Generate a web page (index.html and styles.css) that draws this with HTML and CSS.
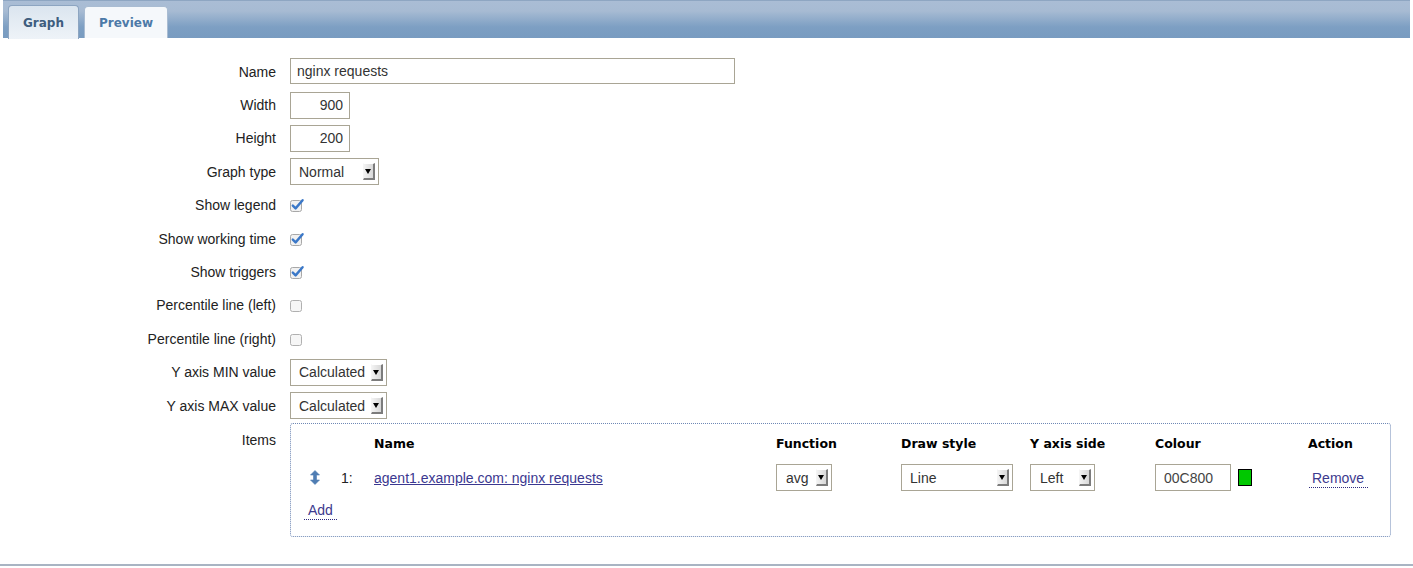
FILE: index.html
```html
<!DOCTYPE html>
<html lang="en">
<head>
    <meta charset="UTF-8">
    <title>Graph</title>
    <link rel="stylesheet" href="styles.css">
</head>
<body>
    <div class="page">
        <div class="tabs">
            <span class="tab active">Graph</span>
            <span class="tab">Preview</span>
        </div>
        <div class="form">
            <div class="row">
                <label>Name</label>
                <input class="text name" type="text" value="nginx requests">
            </div>
            <div class="row">
                <label>Width</label>
                <input class="text num" type="text" value="900">
            </div>
            <div class="row">
                <label>Height</label>
                <input class="text num" type="text" value="200">
            </div>
            <div class="row">
                <label>Graph type</label>
                <div class="select w-normal"><span>Normal</span><span class="arrow"></span></div>
            </div>
            <div class="row">
                <label>Show legend</label>
                <svg class="check" width="16" height="14" viewBox="0 0 16 14"><rect x="1.5" y="2.5" width="11" height="11" rx="2" fill="#f1f1f1" stroke="#a8a8a8"/><path d="M3.8 7.6 L6.6 10.4 L13.6 2.2" stroke="#3b78c8" stroke-width="2.4" fill="none" stroke-linecap="round" stroke-linejoin="round"/></svg>
            </div>
            <div class="row">
                <label>Show working time</label>
                <svg class="check" width="16" height="14" viewBox="0 0 16 14"><rect x="1.5" y="2.5" width="11" height="11" rx="2" fill="#f1f1f1" stroke="#a8a8a8"/><path d="M3.8 7.6 L6.6 10.4 L13.6 2.2" stroke="#3b78c8" stroke-width="2.4" fill="none" stroke-linecap="round" stroke-linejoin="round"/></svg>
            </div>
            <div class="row">
                <label>Show triggers</label>
                <svg class="check" width="16" height="14" viewBox="0 0 16 14"><rect x="1.5" y="2.5" width="11" height="11" rx="2" fill="#f1f1f1" stroke="#a8a8a8"/><path d="M3.8 7.6 L6.6 10.4 L13.6 2.2" stroke="#3b78c8" stroke-width="2.4" fill="none" stroke-linecap="round" stroke-linejoin="round"/></svg>
            </div>
            <div class="row">
                <label>Percentile line (left)</label>
                <svg class="check" width="16" height="14" viewBox="0 0 16 14"><rect x="1.5" y="2.5" width="11" height="11" rx="2" fill="#f6f6f6" stroke="#b0b0b0"/></svg>
            </div>
            <div class="row">
                <label>Percentile line (right)</label>
                <svg class="check" width="16" height="14" viewBox="0 0 16 14"><rect x="1.5" y="2.5" width="11" height="11" rx="2" fill="#f6f6f6" stroke="#b0b0b0"/></svg>
            </div>
            <div class="row">
                <label>Y axis MIN value</label>
                <div class="select w-calc"><span>Calculated</span><span class="arrow"></span></div>
            </div>
            <div class="row">
                <label>Y axis MAX value</label>
                <div class="select w-calc"><span>Calculated</span><span class="arrow"></span></div>
            </div>
            <div class="row items-row">
                <label>Items</label>
                <div class="items">
                    <div class="items-grid">
                        <span></span>
                        <span></span>
                        <span class="th">Name</span>
                        <span class="th">Function</span>
                        <span class="th">Draw style</span>
                        <span class="th">Y axis side</span>
                        <span class="th">Colour</span>
                        <span class="th">Action</span>

                        <span class="drag"><svg width="10" height="15" viewBox="0 0 10 15"><path d="M5 0.5 L9.5 5 L6.5 5 L6.5 10 L9.5 10 L5 14.5 L0.5 10 L3.5 10 L3.5 5 L0.5 5 Z" fill="#4f7db3" stroke="#4f7db3" stroke-width="0.6" stroke-linejoin="round"/></svg></span>
                        <span>1:</span>
                        <span><a class="item-link" href="#">agent1.example.com: nginx requests</a></span>
                        <span><div class="select w-avg"><span>avg</span><span class="arrow"></span></div></span>
                        <span><div class="select w-line"><span>Line</span><span class="arrow"></span></div></span>
                        <span><div class="select w-left"><span>Left</span><span class="arrow"></span></div></span>
                        <span class="colour">
                            <input class="text colour-in" type="text" value="00C800">
                            <span class="swatch"></span>
                        </span>
                        <span><a class="dotted remove" href="#">Remove</a></span>

                        <span class="add-row"><a class="dotted" href="#">Add</a></span>
                    </div>
                </div>
            </div>
        </div>
    </div>
</body>
</html>
```

FILE: styles.css
```css
body {
    margin: 0px;
    padding: 0px;
    background-color: #ffffff;
    font-family: "Liberation Sans", Arial, sans-serif;
    font-size: 14px;
    color: #222222;
}

.page {
    height: 566px;
    box-sizing: border-box;
    border-bottom: 2px solid #a9b4c3;
}

.tabs {
    margin: 0px 3px;
    height: 38px;
    box-sizing: border-box;
    border-top: 1px solid #8ea6c2;
    background: linear-gradient(#aabdd5 0px, #a7bbd3 10px, #7d9fc3 26px, #789bc0 38px);
    display: flex;
    align-items: flex-end;
    gap: 5px;
    padding-left: 5px;
}

.tab {
    font-family: "DejaVu Sans", Verdana, sans-serif;
    font-weight: bold;
    font-size: 12px;
    display: flex;
    align-items: center;
    justify-content: center;
    box-sizing: border-box;
    border: 1px solid #a9bcd2;
    border-bottom: none;
    border-radius: 4px 4px 0px 0px;
    width: 84px;
    height: 32px;
    background-color: #f5f8fb;
    color: #4d7aa8;
}

.tab.active {
    width: 71px;
    height: 34px;
    margin-bottom: -1px;
    border-color: #8da5c1;
    background: linear-gradient(#dbe5ef, #eef3f8);
    color: #3e5d7e;
}

.form {
    padding-top: 17px;
}

.row {
    display: flex;
    align-items: center;
    height: 33.4px;
}

.row label {
    width: 276px;
    margin-right: 14px;
    text-align: right;
}

.text {
    font-family: "Liberation Sans", Arial, sans-serif;
    font-size: 14px;
    color: #333333;
    height: 27px;
    box-sizing: border-box;
    border: 1px solid #a9a595;
    padding: 0px 6px;
    margin: 0px;
    outline: none;
}

.name {
    width: 445px;
    height: 26px;
    margin-top: -1px;
}

.num {
    width: 60px;
    text-align: right;
}

.select {
    display: inline-flex;
    align-items: center;
    justify-content: space-between;
    height: 27px;
    box-sizing: border-box;
    border: 1px solid #a9a595;
    padding-left: 8px;
    padding-right: 3px;
    color: #333333;
    background-color: #ffffff;
}

.arrow {
    width: 12px;
    height: 17px;
    box-sizing: border-box;
    border-top: 1px solid #ffffff;
    border-left: 1px solid #f4f4f4;
    border-right: 2px solid #7c7c7c;
    border-bottom: 2px solid #7c7c7c;
    background: linear-gradient(90deg, #f2f2f2, #d8d8d8);
    position: relative;
}

.arrow::after {
    content: "";
    position: absolute;
    left: 1px;
    top: 5px;
    border-left: 3.5px solid transparent;
    border-right: 3.5px solid transparent;
    border-top: 5px solid #000000;
}

.w-normal { width: 89px; }
.w-calc { width: 97px; }
.w-avg { width: 56px; padding-left: 9px; }
.w-line { width: 112px; }
.w-left { width: 65px; padding-left: 9px; }

.check {
    margin-left: -1px;
}

.items-row {
    align-items: flex-start;
    height: auto;
}

.items-row label {
    padding-top: 10px;
}

.items {
    margin-top: 1px;
    width: 1101px;
    box-sizing: border-box;
    border: 1px dotted #6f88b5;
    border-radius: 3px;
    padding: 10px 0px 17px;
}

.items-grid {
    display: grid;
    grid-template-columns: 50px 33px 402px 125px 129px 125px 153px 1fr;
    row-gap: 10px;
    align-items: center;
}

.th {
    font-family: "DejaVu Sans", Verdana, sans-serif;
    font-weight: bold;
    font-size: 12.5px;
    line-height: 20px;
    color: #000000;
}

.drag {
    padding-left: 19px;
    display: flex;
}

.item-link {
    color: #3b3890;
    text-decoration: underline;
}

.colour {
    display: flex;
    align-items: center;
    gap: 7px;
}

.colour-in {
    width: 76px;
    padding-left: 8px;
    color: #444444;
}

.swatch {
    width: 14px;
    height: 17px;
    box-sizing: border-box;
    border: 1px solid #000000;
    background-color: #00c800;
}

.dotted {
    color: #3d3a8e;
    text-decoration: none;
    padding: 0px 4px 1px;
    border-bottom: 1px dotted #2d2a7e;
}

.remove {
    margin-left: 1px;
    padding-left: 3px;
}

.add-row {
    grid-column: 1 / -1;
    padding-left: 13px;
    line-height: 18px;
    margin-top: 0px;
}
```
